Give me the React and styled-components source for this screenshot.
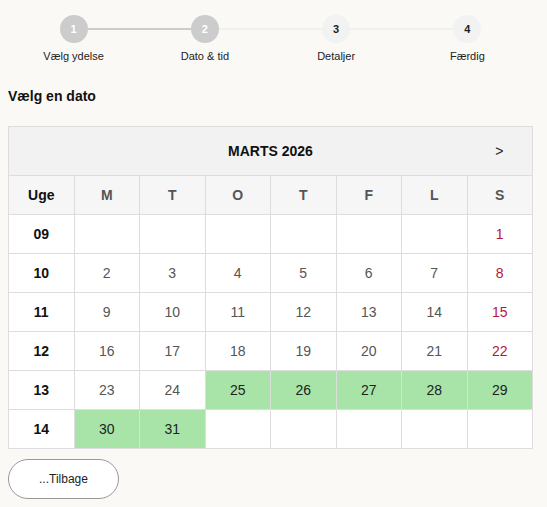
import React from 'react'
import styled, { createGlobalStyle } from 'styled-components'

const GlobalStyle = createGlobalStyle`
  body {
    margin: 0;
    background: #faf9f5;
    font-family: "Liberation Sans", Arial, sans-serif;
    color: #222;
  }
`

const steps = [
  { n: 1, label: 'Vælg ydelse', done: true },
  { n: 2, label: 'Dato & tid', done: true },
  { n: 3, label: 'Detaljer', done: false },
  { n: 4, label: 'Færdig', done: false },
]

const weeks = [
  { wk: '09', days: [null, null, null, null, null, null, 1] },
  { wk: '10', days: [2, 3, 4, 5, 6, 7, 8] },
  { wk: '11', days: [9, 10, 11, 12, 13, 14, 15] },
  { wk: '12', days: [16, 17, 18, 19, 20, 21, 22] },
  { wk: '13', days: [23, 24, 25, 26, 27, 28, 29] },
  { wk: '14', days: [30, 31, null, null, null, null, null] },
]

const available = [25, 26, 27, 28, 29, 30, 31]

function App() {
  return (
    <Page>
      <GlobalStyle />
      <Stepper>
        {steps.map((s, i) => (
          <Step key={s.n} line={i < steps.length - 1} lineDone={i === 0}>
            <Circle done={s.done}>{s.n}</Circle>
            <StepLabel>{s.label}</StepLabel>
          </Step>
        ))}
      </Stepper>

      <Heading>Vælg en dato</Heading>

      <Calendar>
        <thead>
          <tr>
            <MonthCell colSpan={8}>
              <MonthBar>
                <span />
                <MonthTitle>MARTS 2026</MonthTitle>
                <NextBtn>&gt;</NextBtn>
              </MonthBar>
            </MonthCell>
          </tr>
          <tr>
            <DayHead week>Uge</DayHead>
            {['M', 'T', 'O', 'T', 'F', 'L', 'S'].map((d, i) => (
              <DayHead key={i}>{d}</DayHead>
            ))}
          </tr>
        </thead>
        <tbody>
          {weeks.map(w => (
            <tr key={w.wk}>
              <WeekCell>{w.wk}</WeekCell>
              {w.days.map((d, i) => (
                <DayCell
                  key={i}
                  sunday={i === 6}
                  open={d !== null && available.includes(d)}
                >
                  {d}
                </DayCell>
              ))}
            </tr>
          ))}
        </tbody>
      </Calendar>

      <BackBtn>...Tilbage</BackBtn>
    </Page>
  )
}

export default App

const Page = styled.div`
  width: 525px;
  padding: 15px 8px 0;
`

const Stepper = styled.div`
  display: flex;
`

const Step = styled.div`
  flex: 1;
  position: relative;
  display: flex;
  flex-direction: column;
  align-items: center;

  &::after {
    content: '';
    display: ${p => (p.line ? 'block' : 'none')};
    position: absolute;
    top: 13px;
    left: 50%;
    width: 100%;
    height: 2px;
    background: ${p => (p.lineDone ? '#cccccc' : '#f0f0f0')};
    z-index: 0;
  }
`

const Circle = styled.div`
  position: relative;
  z-index: 1;
  width: 28px;
  height: 28px;
  border-radius: 50%;
  display: flex;
  align-items: center;
  justify-content: center;
  font-size: 11px;
  font-weight: bold;
  background: ${p => (p.done ? '#cccccc' : '#f2f2f2')};
  color: ${p => (p.done ? '#ffffff' : '#222')};
`

const StepLabel = styled.div`
  margin-top: 7px;
  font-size: 11px;
  color: #222;
`

const Heading = styled.h3`
  margin: 26px 0 0;
  font-size: 14px;
  font-weight: bold;
  color: #111;
  height: 30px;
`

const Calendar = styled.table`
  width: 100%;
  margin-top: 8px;
  border-collapse: collapse;
  table-layout: fixed;
  background: #fff;
  font-size: 14px;
`

const MonthCell = styled.th`
  background: #f2f2f2;
  border: 1px solid #dddddd;
  height: 48px;
  padding: 0;
`

const MonthBar = styled.div`
  display: grid;
  grid-template-columns: 1fr 6fr 1fr;
  align-items: center;
`

const MonthTitle = styled.span`
  font-weight: bold;
  font-size: 14px;
  color: #111;
  text-align: center;
`

const NextBtn = styled.span`
  font-weight: normal;
  font-size: 14px;
  color: #222;
  text-align: center;
`

const DayHead = styled.th`
  background: #f6f6f6;
  border: 1px solid #dddddd;
  height: 38px;
  padding: 0;
  font-weight: bold;
  color: ${p => (p.week ? '#111' : '#555')};
`

const WeekCell = styled.td`
  border: 1px solid #dddddd;
  height: 38px;
  padding: 0;
  text-align: center;
  font-weight: bold;
  color: #111;
`

const DayCell = styled.td`
  border: 1px solid #dddddd;
  height: 38px;
  padding: 0;
  text-align: center;
  background: ${p => (p.open ? '#a8e4a8' : '#fff')};
  color: ${p => (p.open ? '#222' : p.sunday ? '#b3173e' : '#555')};
`

const BackBtn = styled.button`
  margin-top: 10px;
  width: 111px;
  height: 40px;
  border-radius: 20px;
  border: 1px solid #999;
  background: #fff;
  font-family: "Liberation Sans", Arial, sans-serif;
  font-size: 12px;
  color: #222;
  cursor: pointer;
`
